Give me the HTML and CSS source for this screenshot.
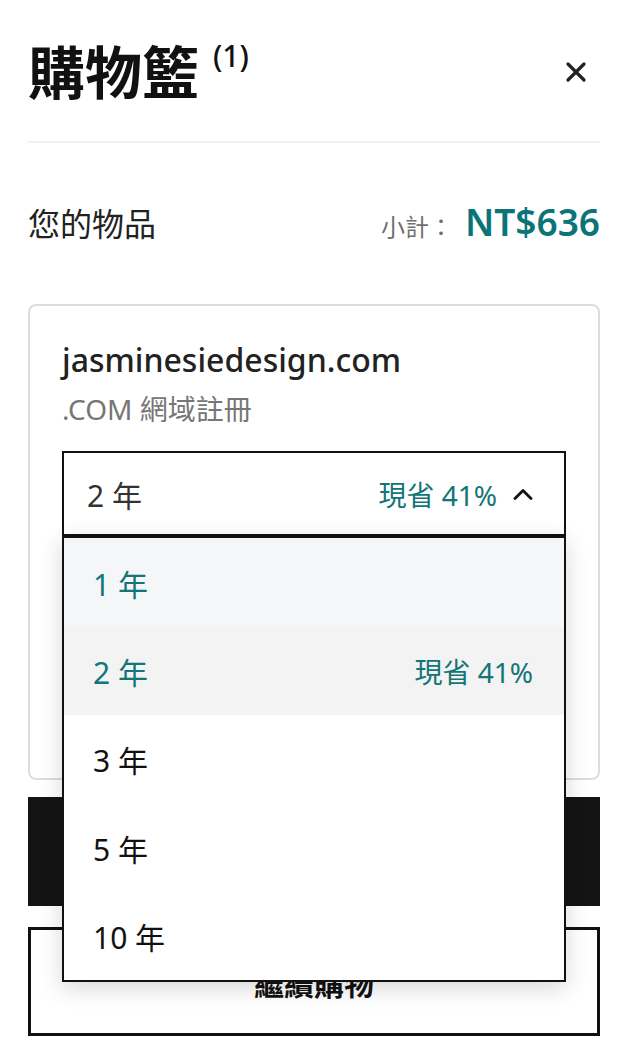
FILE: index.html
```html
<!DOCTYPE html>
<html lang="zh-Hant">
<head>
<meta charset="utf-8">
<title>購物籃</title>
<link rel="stylesheet" href="styles.css">
</head>
<body>
<div class="panel">
  <header class="header">
    <h1 class="title">購物籃<span class="count">(1)</span></h1>
    <button class="close" aria-label="關閉">
      <svg width="22" height="22" viewBox="0 0 22 22"><path d="M3 3 L19 19 M19 3 L3 19" stroke="#222" stroke-width="3.2" stroke-linecap="round" fill="none"/></svg>
    </button>
  </header>

  <div class="summary">
    <span class="summary-label">您的物品</span>
    <span class="subtotal"><span class="subtotal-label">小計：</span><span class="subtotal-value">NT$636</span></span>
  </div>

  <div class="card">
    <div class="domain">jasminesiedesign.com</div>
    <div class="product">.COM 網域註冊</div>
    <div class="select-wrap">
      <div class="select">
        <span class="select-value">2 年</span>
        <span class="select-save">現省 41%</span>
        <svg class="caret" width="20" height="12" viewBox="0 0 20 12"><path d="M2 10.5 L10 2.5 L18 10.5" stroke="#111" stroke-width="2.8" fill="none" stroke-linecap="round" stroke-linejoin="round"/></svg>
      </div>
      <ul class="menu">
        <li class="option hover">1 年</li>
        <li class="option selected"><span>2 年</span><span class="save">現省 41%</span></li>
        <li class="option">3 年</li>
        <li class="option">5 年</li>
        <li class="option">10 年</li>
      </ul>
    </div>
    <div class="item-foot"></div>
  </div>

  <button class="btn btn-primary">前往結帳</button>
  <button class="btn btn-secondary">繼續購物</button>
</div>
</body>
</html>
```

FILE: styles.css
```css
* { box-sizing: border-box; }

html, body {
  margin: 0;
  padding: 0;
  background: #fff;
}

body {
  font-family: "Noto Sans", "Noto Sans CJK TC", sans-serif;
  color: #111;
}

.panel {
  padding: 0 40px 0 28px;
}

.header {
  display: flex;
  justify-content: space-between;
  align-items: center;
  padding: 44px 0 41px;
  border-bottom: 2px solid #eef2f6;
}

.title {
  display: flex;
  align-items: flex-start;
  margin: 0;
  font-size: 57px;
  line-height: 56px;
  font-weight: 700;
  color: #111;
}

.count {
  font-size: 30px;
  line-height: 30px;
  font-weight: 500;
  margin: -3px 0 0 14px;
}

.close {
  border: 0;
  background: none;
  padding: 0;
  margin-right: 13px;
  width: 22px;
  height: 22px;
  display: flex;
}

.summary {
  display: flex;
  justify-content: space-between;
  align-items: baseline;
  padding-top: 57px;
  line-height: 1.2;
}

.summary-label {
  font-size: 32px;
  color: #222;
}

.subtotal-label {
  font-size: 24px;
  color: #6f6f6f;
  margin-right: 12px;
}

.subtotal-value {
  font-size: 37px;
  font-weight: 600;
  color: #0b7478;
}

.card {
  margin-top: 60px;
  border: 2px solid #d8dee3;
  border-radius: 8px;
  padding: 33px 32px 32px;
}

.domain {
  font-size: 32px;
  line-height: 41.6px;
  font-weight: 500;
  color: #222;
}

.product {
  margin-top: 10px;
  font-size: 28px;
  line-height: 36.4px;
  color: #767676;
}

.select-wrap {
  position: relative;
  margin-top: 24px;
}

.select {
  display: flex;
  align-items: center;
  height: 85px;
  border: 2px solid #111;
  padding: 0 31px 0 23px;
}

.select-value {
  flex: 1;
  font-size: 30px;
  color: #333;
}

.select-save {
  font-size: 28px;
  color: #127577;
  margin-right: 16px;
}

.caret {
  display: block;
}

.menu {
  position: absolute;
  top: 100%;
  left: 0;
  right: 0;
  z-index: 10;
  margin: 0;
  padding: 0;
  list-style: none;
  background: #fff;
  border: 2px solid #111;
  box-shadow: 0 6px 22px rgba(0, 0, 0, 0.16);
}

.option {
  display: flex;
  justify-content: space-between;
  align-items: center;
  height: 88.4px;
  padding: 0 31px 0 29px;
  font-size: 30px;
  color: #111;
}

.option.hover {
  background: #f5f6f8;
  color: #127577;
}

.option.selected {
  background: #f3f3f3;
  color: #127577;
}

.option .save {
  font-size: 28px;
}

.item-foot {
  height: 210px;
}

.btn {
  display: block;
  width: 100%;
  font-family: "Noto Sans", "Noto Sans CJK TC", sans-serif;
  font-size: 30px;
  font-weight: 700;
  cursor: pointer;
}

.btn-primary {
  margin-top: 17px;
  height: 109px;
  background: #141414;
  color: #fff;
  border: 0;
}

.btn-secondary {
  margin-top: 21px;
  height: 109px;
  background: #fff;
  color: #111;
  border: 3px solid #111;
}
```
